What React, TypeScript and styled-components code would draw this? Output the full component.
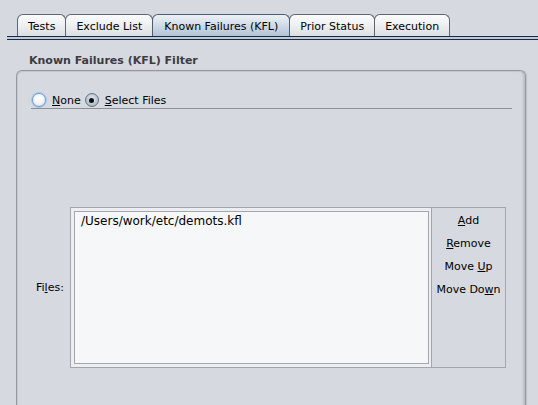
import React from 'react';
import styled, { createGlobalStyle } from 'styled-components';

const Global = createGlobalStyle`
  html, body { margin: 0; padding: 0; background: #d6d9df; }
  body {
    font-family: "DejaVu Sans", "Liberation Sans", sans-serif;
    font-size: 11px;
    color: #000;
    overflow: hidden;
  }
`;

const Page = styled.div`
  width: 538px;
  height: 405px;
  overflow: hidden;
  box-sizing: border-box;
  padding-top: 14px;
  background: #d6d9df;
`;

const TabStrip = styled.div`
  margin-left: 7px;
  padding-left: 10px;
  display: flex;
  border-bottom: 1px solid #1c2a3f;
`;

const Tab = styled.div<{ $selected?: boolean }>`
  position: relative;
  z-index: ${(p) => (p.$selected ? 2 : 1)};
  height: 22px;
  box-sizing: border-box;
  padding: 5px ${(p) => (p.$selected ? '11px' : '10px')} 0;
  margin-left: -1px;
  border: 1px solid ${(p) => (p.$selected ? '#4f5d70' : '#5e6673')};
  border-bottom: none;
  border-radius: 6px 6px 0 0;
  line-height: 13px;
  white-space: nowrap;
  color: #000;
  background: ${(p) =>
    p.$selected
      ? 'linear-gradient(#edf1f6 0%, #d3dde8 45%, #b3c3d5 100%)'
      : 'linear-gradient(#fbfbfc 0%, #eeeff1 50%, #dcdee2 100%)'};
  &:first-child { margin-left: 0; }
`;

const ContentEdge = styled.div`
  margin-left: 7px;
  height: 2px;
  background: #bccadb;
  border-bottom: 1px solid #1c2a3f;
`;

const GroupTitle = styled.div`
  margin: 14px 0 0 29px;
  line-height: 13px;
  font-weight: bold;
  color: #3b3d42;
`;

const GroupPanel = styled.div`
  margin: 3px 12px 0 16px;
  height: 400px;
  box-sizing: border-box;
  padding: 0 13px 0 14px;
  border: 1px solid #979aa1;
  border-bottom: none;
  border-radius: 6px 6px 0 0;
  box-shadow: inset 1px 1px 0 #c3c6cc, inset -2px 0 2px rgba(0, 0, 0, 0.12),
    1px 0 1px rgba(0, 0, 0, 0.12);
`;

const RadioRow = styled.div`
  margin-top: 21px;
  height: 16px;
  display: flex;
  align-items: center;
  border-bottom: 1px solid #8c8f95;
  padding-left: 1px;
`;

const RadioCircle = styled.span<{ $checked?: boolean; $focused?: boolean }>`
  position: relative;
  flex: none;
  width: 14px;
  height: 14px;
  box-sizing: border-box;
  border-radius: 50%;
  border: 1px solid ${(p) => (p.$focused ? '#6e9bcf' : '#66727f')};
  background: ${(p) =>
    p.$checked
      ? 'radial-gradient(circle at 50% 40%, #e4e9ef 0%, #b9c4d1 60%, #8f9cad 100%)'
      : 'radial-gradient(circle at 50% 35%, #ffffff 0%, #f2f3f5 55%, #cfd3d9 100%)'};
  box-shadow: ${(p) => (p.$focused ? '0 0 0 1px #a9c6e6' : 'none')};
  &::after {
    content: '';
    display: ${(p) => (p.$checked ? 'block' : 'none')};
    position: absolute;
    left: 50%;
    top: 50%;
    width: 5px;
    height: 5px;
    margin: -2.5px 0 0 -2.5px;
    border-radius: 50%;
    background: #0c0f14;
  }
`;

const RadioLabel = styled.span<{ $gap: number }>`
  margin-left: 6px;
  margin-right: ${(p) => p.$gap}px;
  line-height: 13px;
  white-space: nowrap;
`;

const Mn = styled.span`
  text-decoration: underline;
  text-underline-offset: 1px;
`;

const FilesRow = styled.div`
  margin-top: 98px;
  padding: 0 6px 0 5px;
  display: flex;
  align-items: center;
`;

const FieldLabel = styled.span`
  flex: none;
  width: 28px;
  margin-right: 6px;
  line-height: 13px;
  white-space: nowrap;
`;

const EditorBox = styled.div`
  flex: 1;
  height: 161px;
  box-sizing: border-box;
  display: flex;
  border: 1px solid #a1a5ac;
`;

const ListWell = styled.div`
  flex: 1;
  display: flex;
  padding: 3px 2px 3px 3px;
  background: #eceef1;
`;

const FileList = styled.div`
  flex: 1;
  box-sizing: border-box;
  border: 1px solid #a4a8ae;
  background: #f6f7f9;
  padding: 2px 6px;
  font-size: 12px;
  line-height: 15px;
  color: #000;
`;

const ButtonColumn = styled.div`
  flex: none;
  width: 73px;
  border-left: 1px solid #a1a5ac;
  padding-top: 1px;
  display: flex;
  flex-direction: column;
  align-items: center;
`;

const LinkButton = styled.button`
  height: 23px;
  padding: 0;
  border: none;
  background: none;
  font: inherit;
  font-size: 11px;
  line-height: 23px;
  color: #000;
  white-space: nowrap;
  cursor: default;
`;

const tabs = ['Tests', 'Exclude List', 'Known Failures (KFL)', 'Prior Status', 'Execution'];

export default function App() {
  return (
    <Page>
      <Global />
      <TabStrip>
        {tabs.map((t) => (
          <Tab key={t} $selected={t === 'Known Failures (KFL)'}>
            {t}
          </Tab>
        ))}
      </TabStrip>
      <ContentEdge />
      <GroupTitle>Known Failures (KFL) Filter</GroupTitle>
      <GroupPanel>
        <RadioRow>
          <RadioCircle $focused />
          <RadioLabel $gap={4}>
            <Mn>N</Mn>one
          </RadioLabel>
          <RadioCircle $checked />
          <RadioLabel $gap={0}>
            <Mn>S</Mn>elect Files
          </RadioLabel>
        </RadioRow>
        <FilesRow>
          <FieldLabel>
            Fi<Mn>l</Mn>es:
          </FieldLabel>
          <EditorBox>
            <ListWell>
              <FileList>/Users/work/etc/demots.kfl</FileList>
            </ListWell>
            <ButtonColumn>
              <LinkButton>
                <Mn>A</Mn>dd
              </LinkButton>
              <LinkButton>
                <Mn>R</Mn>emove
              </LinkButton>
              <LinkButton>
                Move <Mn>U</Mn>p
              </LinkButton>
              <LinkButton>
                Move Do<Mn>w</Mn>n
              </LinkButton>
            </ButtonColumn>
          </EditorBox>
        </FilesRow>
      </GroupPanel>
    </Page>
  );
}
